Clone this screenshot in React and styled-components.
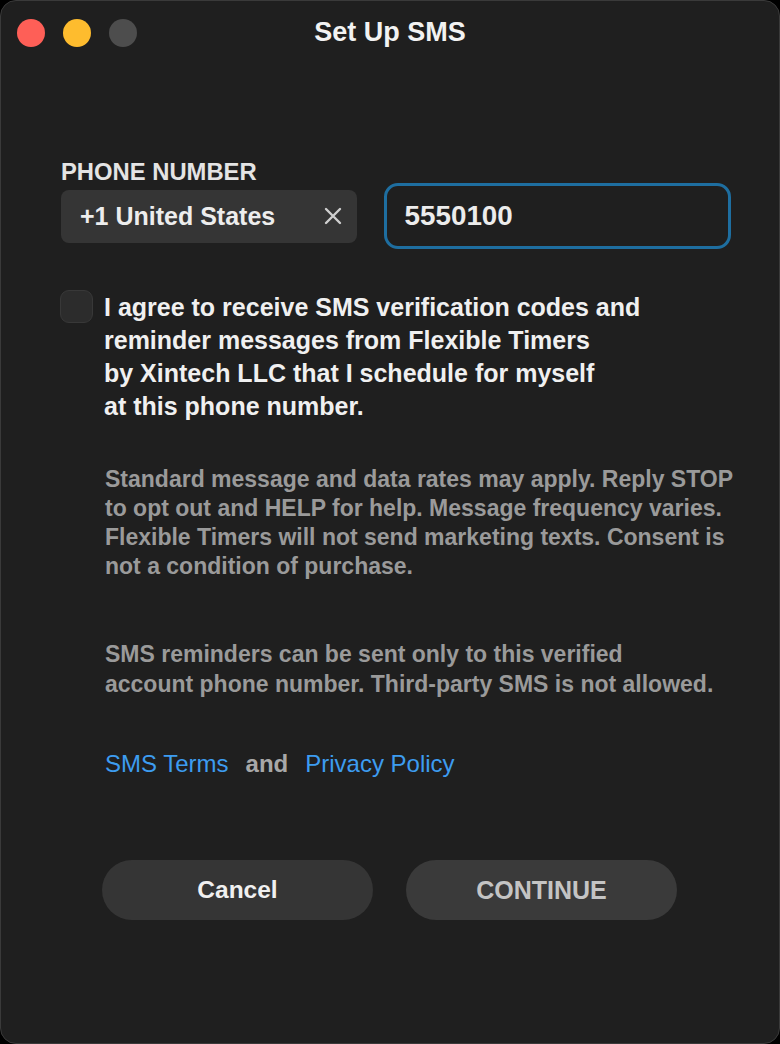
import React from "react";
import styled, { createGlobalStyle } from "styled-components";

const Global = createGlobalStyle`
  html, body { margin: 0; padding: 0; background: #000; }
  body { font-family: "Liberation Sans", Arial, sans-serif; }
  * { box-sizing: border-box; }
`;

const Window = styled.div`
  width: 780px;
  height: 1044px;
  background: #1f1f1f;
  border: 1px solid #3a3a3a;
  border-radius: 16px;
  display: flex;
  flex-direction: column;
  overflow: hidden;
`;

const TitleBar = styled.div`
  position: relative;
  height: 64px;
  display: flex;
  align-items: center;
  justify-content: center;
`;

const Lights = styled.div`
  position: absolute;
  left: 16px;
  top: 18px;
  display: flex;
  gap: 18px;
`;

const Light = styled.span`
  width: 28px;
  height: 28px;
  border-radius: 50%;
  background: ${(p) => p.$c};
`;

const Title = styled.h1`
  margin: 0 0 1px 0;
  font-size: 27px;
  font-weight: 700;
  color: #f2f2f2;
`;

const Content = styled.div`
  padding: 94px 48px 0 59px;
  display: flex;
  flex-direction: column;
`;

const Label = styled.div`
  font-size: 23.8px;
  font-weight: 700;
  color: #e4e4e4;
  line-height: 26px;
  margin-left: 1px;
`;

const PhoneRow = styled.div`
  display: flex;
  align-items: center;
  gap: 27px;
  margin-top: -2px;
`;

const Country = styled.div`
  width: 296px;
  height: 53px;
  margin-left: 1px;
  background: #353535;
  border-radius: 8px;
  display: flex;
  align-items: center;
  justify-content: space-between;
  padding: 0 14px 0 19px;
  font-size: 25px;
  font-weight: 700;
  color: #ededed;
`;

const ClearIcon = styled.svg`
  width: 20px;
  height: 20px;
`;

const NumberInput = styled.div`
  width: 348px;
  height: 66px;
  border: 3px solid #1e6ea0;
  border-radius: 14px;
  display: flex;
  align-items: center;
  padding-left: 18px;
  font-size: 27.8px;
  font-weight: 700;
  color: #ececec;
`;

const ConsentRow = styled.div`
  display: flex;
  gap: 11px;
  margin-top: 41px;
`;

const Checkbox = styled.div`
  width: 33px;
  height: 33px;
  flex: none;
  border-radius: 9px;
  background: #2c2c2c;
  border: 1px solid #383838;
`;

const ConsentText = styled.div`
  font-size: 25px;
  font-weight: 700;
  line-height: 33px;
  color: #f0f0f0;
  padding-top: 1px;
`;

const Note = styled.p`
  margin: ${(p) => p.$mt}px 0 0 45px;
  font-size: 23px;
  font-weight: 700;
  line-height: ${(p) => p.$lh}px;
  color: #9a9a9a;
  white-space: nowrap;
`;

const Links = styled.div`
  margin: 51px 0 0 45px;
  display: flex;
  gap: 17px;
  font-size: 24px;
  line-height: 28px;
`;

const LinkText = styled.a`
  color: #3d9cf0;
  text-decoration: none;
`;

const And = styled.span`
  color: #a8a8a8;
  font-weight: 700;
`;

const Buttons = styled.div`
  display: flex;
  justify-content: center;
  gap: 33px;
  margin: 82px 0 0 -12px;
`;

const Button = styled.button`
  width: 271px;
  height: 60px;
  border: none;
  border-radius: 30px;
  background: ${(p) => (p.$primary ? "#3a3a3a" : "#353535")};
  color: ${(p) => (p.$primary ? "#c4c4c4" : "#f0f0f0")};
  font-family: "Liberation Sans", Arial, sans-serif;
  font-size: ${(p) => (p.$primary ? 25 : 24.5)}px;
  font-weight: 700;
`;

export default function App() {
  return (
    <>
      <Global />
      <Window>
        <TitleBar>
          <Lights>
            <Light $c="#fe5f57" />
            <Light $c="#febc2e" />
            <Light $c="#4d4d4d" />
          </Lights>
          <Title>Set Up SMS</Title>
        </TitleBar>
        <Content>
          <Label>PHONE NUMBER</Label>
          <PhoneRow>
            <Country>
              <span>+1 United States</span>
              <ClearIcon viewBox="0 0 20 20">
                <path d="M3 3 L17 17 M17 3 L3 17" stroke="#cfcfcf" strokeWidth="2.4" strokeLinecap="round" />
              </ClearIcon>
            </Country>
            <NumberInput>5550100</NumberInput>
          </PhoneRow>
          <ConsentRow>
            <Checkbox />
            <ConsentText>
              I agree to receive SMS verification codes and
              <br />
              reminder messages from Flexible Timers
              <br />
              by Xintech LLC that I schedule for myself
              <br />
              at this phone number.
            </ConsentText>
          </ConsentRow>
          <Note $mt={42} $lh={29}>
            Standard message and data rates may apply. Reply STOP
            <br />
            to opt out and HELP for help. Message frequency varies.
            <br />
            Flexible Timers will not send marketing texts. Consent is
            <br />
            not a condition of purchase.
          </Note>
          <Note $mt={58} $lh={30}>
            SMS reminders can be sent only to this verified
            <br />
            account phone number. Third-party SMS is not allowed.
          </Note>
          <Links>
            <LinkText href="#">SMS Terms</LinkText>
            <And>and</And>
            <LinkText href="#">Privacy Policy</LinkText>
          </Links>
          <Buttons>
            <Button>Cancel</Button>
            <Button $primary>CONTINUE</Button>
          </Buttons>
        </Content>
      </Window>
    </>
  );
}
